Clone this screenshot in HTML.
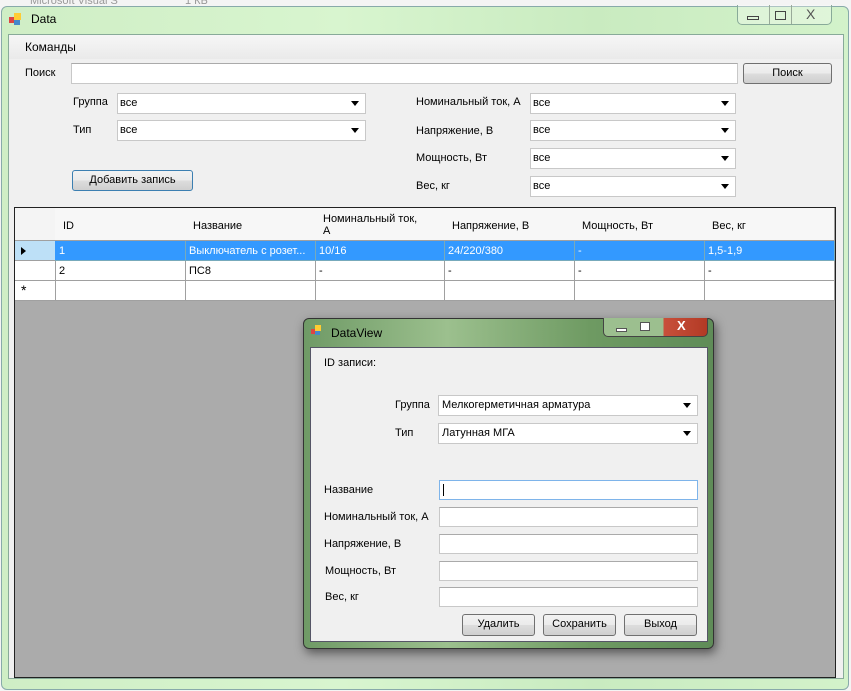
<!DOCTYPE html><html><head><meta charset="utf-8"><style>
*{margin:0;padding:0;box-sizing:border-box}
body{width:851px;height:691px;position:relative;overflow:hidden;background:#f4f4f4;font-family:"Liberation Sans",sans-serif;font-size:11px;color:#000}
.a{position:absolute}
.t{position:absolute;white-space:nowrap}
.in{position:absolute;background:#fff;border:1px solid #c8c8c8;border-top-color:#aaa}
.cb{position:absolute;background:#fff;border:1px solid #c8c8c8;padding:3px 0 0 2px;font-size:11px}
.cb:after{content:"";position:absolute;right:6px;top:7px;border-left:4px solid transparent;border-right:4px solid transparent;border-top:5px solid #000}
.btn{position:absolute;border:1px solid #707070;border-radius:3px;background:linear-gradient(#f2f2f2,#ebebeb 50%,#dddddd 51%,#cfcfcf);text-align:center;line-height:19px}
.c{position:absolute;border-right:1px solid #a0a0a0;border-bottom:1px solid #a0a0a0;padding:4px 0 0 4px;white-space:nowrap;overflow:hidden;height:20px}
</style></head><body>
<div class="t" style="left:30px;top:-5px;color:#999">Microsoft Visual S</div>
<div class="t" style="left:185px;top:-5px;color:#999">1 КБ</div>
<div class="a" style="left:1px;top:6px;width:848px;height:684px;border:1px solid #8aa;border-radius:6px;background:linear-gradient(90deg,#cfeec5,#d8f5cf 40%,#c9ebc0 70%,#d3f2ca)"></div>
<div class="a" style="left:9px;top:12px;width:15px;height:15px">
<div class="a" style="left:0;top:5px;width:6px;height:6px;background:#d44"></div>
<div class="a" style="left:5px;top:1px;width:7px;height:7px;background:#fc3"></div>
<div class="a" style="left:5px;top:8px;width:6px;height:5px;background:#48c"></div></div>
<div class="t" style="left:31px;top:12px;font-size:12px">Data</div>
<div class="a" style="left:737px;top:5px;width:95px;height:20px;border:1px solid #8a9;border-top:none;border-radius:0 0 5px 5px;background:rgba(255,255,255,.3)"></div>
<div class="a" style="left:769px;top:5px;width:1px;height:19px;background:#9a9"></div>
<div class="a" style="left:791px;top:5px;width:1px;height:19px;background:#9a9"></div>
<div class="a" style="left:747px;top:16px;width:12px;height:4px;border:1px solid #444"></div>
<div class="a" style="left:775px;top:11px;width:11px;height:9px;border:1px solid #444"></div>
<div class="t" style="left:806px;top:6px;font-size:14px;color:#555">X</div>
<div class="a" style="left:8px;top:34px;width:836px;height:645px;background:#f0f0f0;border:1px solid #8a9"></div>
<div class="a" style="left:9px;top:35px;width:834px;height:24px;background:linear-gradient(#f6f6f6,#eaeaea)"></div>
<div class="t" style="left:25px;top:40px;font-size:12px">Команды</div>
<div class="t" style="left:25px;top:67px">Поиск</div>
<div class="in" style="left:71px;top:63px;width:667px;height:21px"></div>
<div class="btn" style="left:743px;top:63px;width:89px;height:21px">Поиск</div>
<div class="t" style="left:73px;top:96px">Группа</div>
<div class="cb" style="left:117px;top:93px;width:249px;height:21px">все</div>
<div class="t" style="left:73px;top:124px">Тип</div>
<div class="cb" style="left:117px;top:120px;width:249px;height:21px">все</div>
<div class="btn" style="left:72px;top:170px;width:121px;height:21px;border-color:#3c7fb1">Добавить запись</div>
<div class="t" style="left:416px;top:96px">Номинальный ток, А</div>
<div class="cb" style="left:530px;top:93px;width:206px;height:21px">все</div>
<div class="t" style="left:416px;top:125px">Напряжение, В</div>
<div class="cb" style="left:530px;top:120px;width:206px;height:21px">все</div>
<div class="t" style="left:416px;top:152px">Мощность, Вт</div>
<div class="cb" style="left:530px;top:148px;width:206px;height:21px">все</div>
<div class="t" style="left:416px;top:180px">Вес, кг</div>
<div class="cb" style="left:530px;top:176px;width:206px;height:21px">все</div>
<div class="a" style="left:14px;top:207px;width:822px;height:471px;background:#ababab;border:1px solid #222"></div>
<div class="a" style="left:15px;top:208px;width:820px;height:93px;background:#fff"></div>
<div class="c" style="left:15px;top:208px;width:41px;height:33px;background:#f4f4f4"></div>
<div class="c" style="left:55px;top:208px;width:131px;height:33px;padding-top:12px;padding-left:8px;background:#f7f7f7">ID</div>
<div class="c" style="left:185px;top:208px;width:131px;height:33px;padding-top:12px;padding-left:8px;background:#f7f7f7">Название</div>
<div class="c" style="left:315px;top:208px;width:130px;height:33px;padding-top:5px;padding-left:8px;line-height:12px;background:#f7f7f7;white-space:normal">Номинальный ток,<br>А</div>
<div class="c" style="left:444px;top:208px;width:131px;height:33px;padding-top:12px;padding-left:8px;background:#f7f7f7">Напряжение, В</div>
<div class="c" style="left:574px;top:208px;width:131px;height:33px;padding-top:12px;padding-left:8px;background:#f7f7f7">Мощность, Вт</div>
<div class="c" style="left:704px;top:208px;width:131px;height:33px;padding-top:12px;padding-left:8px;background:#f7f7f7">Вес, кг</div>
<div class="c" style="left:15px;top:241px;width:41px;background:#bde0f7"></div>
<div class="a" style="left:21px;top:247px;border-top:4px solid transparent;border-bottom:4px solid transparent;border-left:5px solid #000"></div>
<div class="a" style="left:55px;top:241px;width:780px;height:20px;background:#3399ff"></div>
<div class="c" style="left:55px;top:241px;width:131px;color:#fff;border-color:#7ab">1</div>
<div class="c" style="left:185px;top:241px;width:131px;color:#fff;border-color:#7ab">Выключатель с розет...</div>
<div class="c" style="left:315px;top:241px;width:130px;color:#fff;border-color:#7ab">10/16</div>
<div class="c" style="left:444px;top:241px;width:131px;color:#fff;border-color:#7ab">24/220/380</div>
<div class="c" style="left:574px;top:241px;width:131px;color:#fff;border-color:#7ab">-</div>
<div class="c" style="left:704px;top:241px;width:131px;color:#fff;border-color:#7ab">1,5-1,9</div>
<div class="c" style="left:15px;top:261px;width:41px"></div>
<div class="c" style="left:55px;top:261px;width:131px">2</div>
<div class="c" style="left:185px;top:261px;width:131px">ПС8</div>
<div class="c" style="left:315px;top:261px;width:130px">-</div>
<div class="c" style="left:444px;top:261px;width:131px">-</div>
<div class="c" style="left:574px;top:261px;width:131px">-</div>
<div class="c" style="left:704px;top:261px;width:131px">-</div>
<div class="c" style="left:15px;top:281px;width:41px;padding-left:6px;font-size:14px;padding-top:1px">*</div>
<div class="c" style="left:55px;top:281px;width:131px"></div>
<div class="c" style="left:185px;top:281px;width:131px"></div>
<div class="c" style="left:315px;top:281px;width:130px"></div>
<div class="c" style="left:444px;top:281px;width:131px"></div>
<div class="c" style="left:574px;top:281px;width:131px"></div>
<div class="c" style="left:704px;top:281px;width:131px"></div>
<div class="a" style="left:303px;top:318px;width:411px;height:331px;border:1px solid #333;border-radius:6px;background:linear-gradient(90deg,#6f9a66,#9cc08e 35%,#6e9a62 70%,#5f8c58);box-shadow:2px 4px 10px rgba(0,0,0,.5)"></div>
<div class="a" style="left:309px;top:320px;width:20px;height:20px">
<div class="a" style="left:2px;top:9px;width:5px;height:5px;background:#d44"></div>
<div class="a" style="left:6px;top:5px;width:6px;height:6px;background:#fc3"></div>
<div class="a" style="left:6px;top:11px;width:5px;height:4px;background:#48c"></div></div>
<div class="t" style="left:331px;top:326px;font-size:12px">DataView</div>
<div class="a" style="left:603px;top:318px;width:105px;height:19px;border:1px solid #444;border-top:none;border-radius:0 0 5px 5px;background:linear-gradient(90deg,#9cbf8f 0,#9cbf8f 58%,#c8503b 58%,#b33a25)"></div>
<div class="a" style="left:616px;top:328px;width:11px;height:4px;background:#fff;border:1px solid #555"></div>
<div class="a" style="left:640px;top:322px;width:10px;height:9px;border:1px solid #555;background:#fff"></div>
<div class="t" style="left:677px;top:318px;color:#fff;font-weight:bold;font-size:13px">X</div>
<div class="a" style="left:310px;top:347px;width:398px;height:295px;background:#f0f0f0;border:1px solid #556"></div>
<div class="t" style="left:324px;top:357px">ID записи:</div>
<div class="t" style="left:395px;top:399px">Группа</div>
<div class="cb" style="left:438px;top:395px;width:260px;height:21px;padding-left:3px">Мелкогерметичная арматура</div>
<div class="t" style="left:395px;top:427px">Тип</div>
<div class="cb" style="left:438px;top:423px;width:260px;height:21px;padding-left:3px">Латунная МГА</div>
<div class="t" style="left:324px;top:484px">Название</div>
<div class="in" style="left:439px;top:480px;width:259px;height:20px;border-color:#7eb4ea"></div>
<div class="a" style="left:443px;top:484px;width:1px;height:12px;background:#000"></div>
<div class="t" style="left:324px;top:511px">Номинальный ток, А</div>
<div class="in" style="left:439px;top:507px;width:259px;height:20px"></div>
<div class="t" style="left:324px;top:538px">Напряжение, В</div>
<div class="in" style="left:439px;top:534px;width:259px;height:20px"></div>
<div class="t" style="left:325px;top:565px">Мощность, Вт</div>
<div class="in" style="left:439px;top:561px;width:259px;height:20px"></div>
<div class="t" style="left:325px;top:591px">Вес, кг</div>
<div class="in" style="left:439px;top:587px;width:259px;height:20px"></div>
<div class="btn" style="left:462px;top:614px;width:73px;height:22px">Удалить</div>
<div class="btn" style="left:543px;top:614px;width:73px;height:22px">Сохранить</div>
<div class="btn" style="left:624px;top:614px;width:73px;height:22px">Выход</div>
</body></html>
